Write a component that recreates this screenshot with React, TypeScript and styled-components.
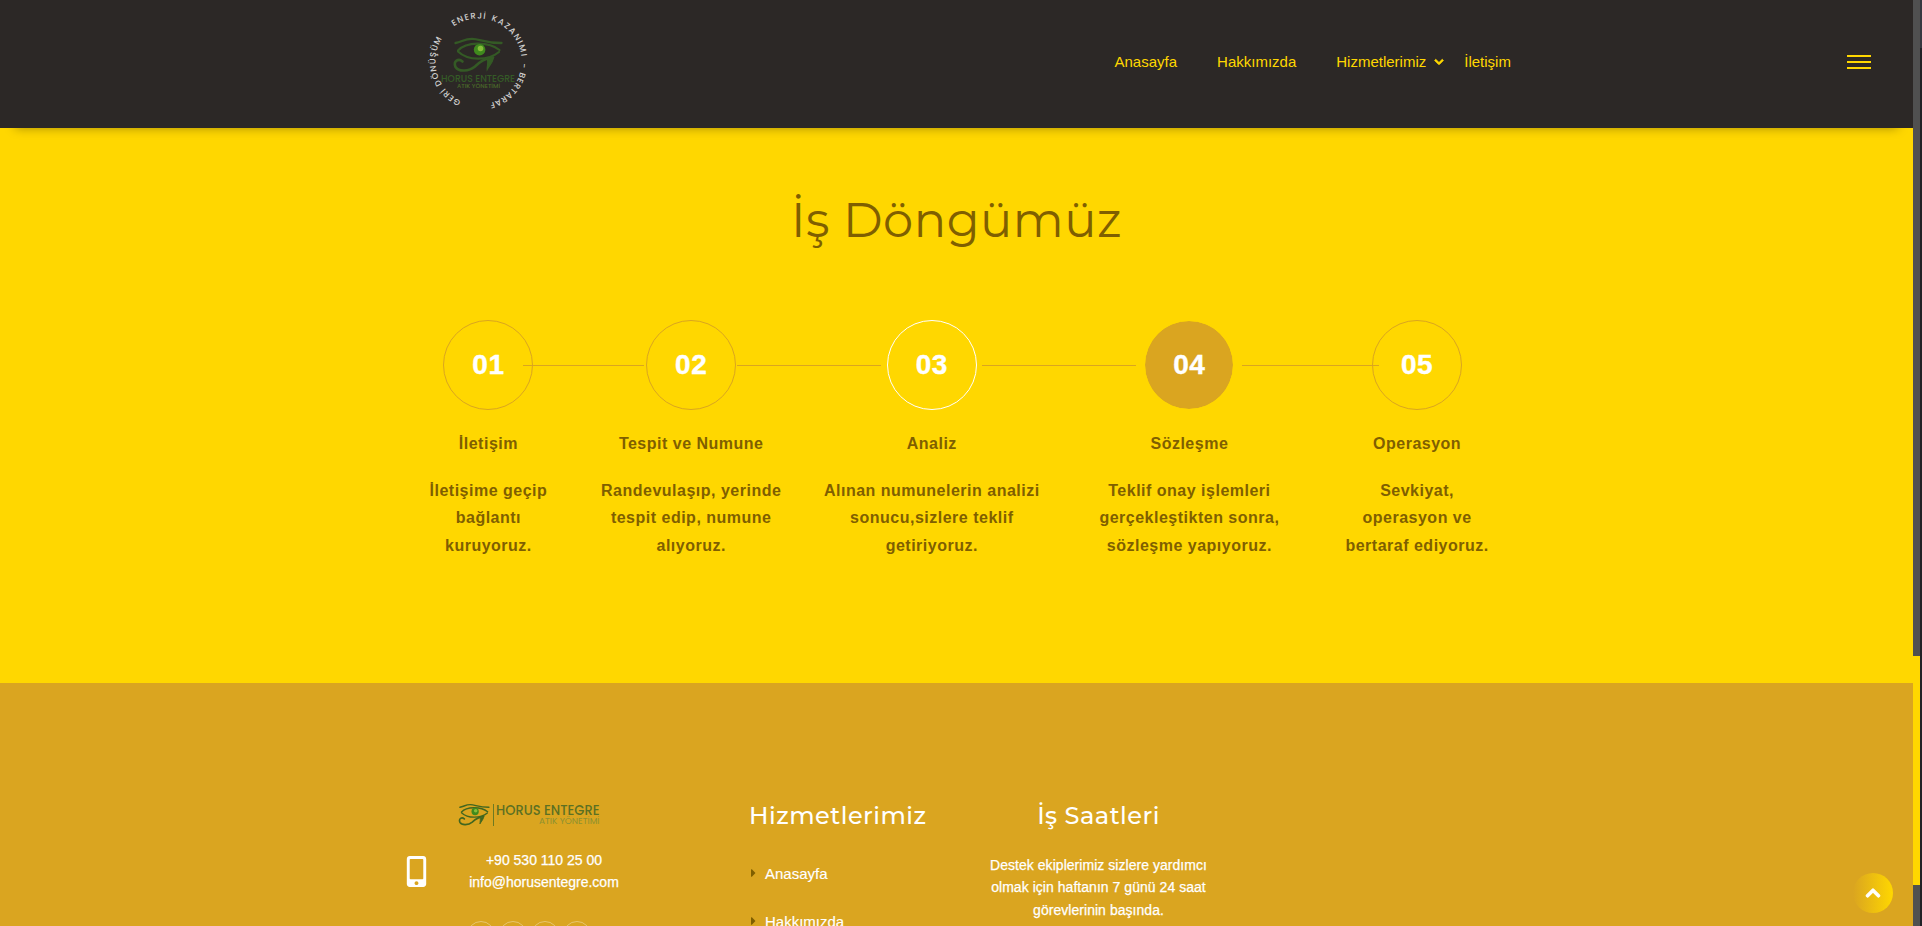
import React from 'react';
import styled, { createGlobalStyle } from 'styled-components';
import { FaCaretRight, FaChevronDown, FaChevronUp, FaMobileAlt } from 'react-icons/fa';

const gold = '#ffd700';
const amber = '#daa520';
const brown = '#7f5f00';
const display = "Montserrat, Inter, 'Open Sans', sans-serif";
const logoFont = 'Poppins, Montserrat, Inter, sans-serif';

const GlobalStyle = createGlobalStyle`
  * { box-sizing: border-box; }
  html, body { margin: 0; height: 100%; overflow: hidden; }
  body { font-family: 'Liberation Sans', Arial, sans-serif; }
  a { color: inherit; text-decoration: none; }
`;

const Shell = styled.div`
  display: grid;
  grid-template-columns: minmax(0, 1fr) 7px 2px;
  height: 926px;
  overflow: hidden;
`;

const Page = styled.div`
  position: relative;
  display: flex;
  flex-direction: column;
  height: 926px;
  overflow: hidden;
`;

const ScrollTrack = styled.div`
  background: #505050;
  padding-top: 656px;
`;

const ScrollThumb = styled.div`
  height: 229px;
  background: ${gold};
`;

const WindowEdge = styled.div`
  background: linear-gradient(#363840 48px, #212227 48px);
`;

const Header = styled.header`
  position: relative;
  z-index: 1;
  flex: none;
  height: 128px;
  display: flex;
  align-items: flex-start;
  background: #2c2826;
  color: ${gold};
  box-shadow: 0 15px 10px -15px rgba(0, 0, 0, 0.35);
`;

const SealLink = styled.a`
  display: block;
  margin-left: 418px;
  width: 120px;
  height: 120px;
`;

const Nav = styled.nav`
  display: flex;
  margin-left: 576.5px;
  padding-top: 53px;
  font-size: 15px;
  line-height: 18px;
`;

const NavItem = styled.a<{ $gap?: number }>`
  display: flex;
  align-items: center;
  margin-right: ${(p) => p.$gap ?? 40}px;
  svg {
    margin-left: 8px;
    overflow: visible;
    stroke: currentColor;
    stroke-width: 45px;
  }
`;

const Burger = styled.button`
  margin: 55px 42px 0 auto;
  padding: 0;
  width: 24px;
  border: 0;
  background: none;
  display: grid;
  gap: 4px;
`;

const BurgerLine = styled.span`
  height: 2px;
  background: ${gold};
`;

const Cycle = styled.section`
  flex: none;
  height: 555px;
  background: ${gold};
  color: ${brown};
  padding-top: 60px;
`;

const CycleTitle = styled.h2`
  margin: 0;
  text-align: center;
  font: 400 48px/64px ${display};
  letter-spacing: 0.5px;
`;

const Steps = styled.div`
  display: flex;
  margin: 68px 0 0 411px;
`;

const Step = styled.article<{ $width: number }>`
  position: relative;
  width: ${(p) => p.$width}px;
  text-align: center;
  font-weight: 700;
  font-size: 16px;
  letter-spacing: 0.5px;
`;

const Connector = styled.i<{ $from: number; $length: number }>`
  position: absolute;
  z-index: 1;
  top: 45px;
  left: ${(p) => p.$from}px;
  width: ${(p) => p.$length}px;
  height: 1px;
  background: ${amber};
`;

const StepCircle = styled.div<{ $kind: 'plain' | 'white' | 'filled' }>`
  width: 90px;
  height: 90px;
  margin: 0 auto;
  border: 1px solid ${(p) => (p.$kind === 'white' ? '#fff' : p.$kind === 'filled' ? gold : amber)};
  border-radius: 50%;
  background: ${(p) => (p.$kind === 'filled' ? amber : 'transparent')};
  background-clip: padding-box;
  color: #fff;
  font-size: 28px;
  line-height: 88px;
  -webkit-text-stroke: 0.4px #fff;
`;

const StepTitle = styled.h3`
  margin: 20px 0 0;
  font-size: 16px;
  line-height: 27px;
`;

const StepText = styled.p`
  margin: 20px 0 0;
  line-height: 27.3px;
  white-space: pre-line;
`;

const Footer = styled.footer`
  flex: none;
  height: 243px;
  overflow: hidden;
  display: flex;
  background: ${amber};
  color: #fff;
  padding: 119px 0 0 406px;
`;

const Company = styled.div`
  width: 343px;
`;

const BrandLink = styled.a`
  display: block;
  width: 144px;
  height: 26px;
  margin-left: 52px;
`;

const Contact = styled.div`
  display: flex;
  align-items: flex-start;
  margin-top: 21px;
  > svg { margin: 7px 0 0 -5px; }
`;

const ContactLines = styled.div`
  width: 150px;
  margin-left: 37px;
  display: flex;
  flex-direction: column;
  align-items: center;
  font-size: 14px;
  line-height: 22px;
  -webkit-text-stroke: 0.25px #fff;
`;

const Socials = styled.div`
  display: flex;
  gap: 4px;
  margin: 28px 0 0 61px;
`;

const SocialRing = styled.a`
  width: 28px;
  height: 28px;
  border: 1px solid rgba(255, 255, 255, 0.35);
  border-radius: 50%;
`;

const FooterTitle = styled.h4`
  margin: -3px 0 0;
  font: 500 24px/34px ${display};
  letter-spacing: 0.5px;
`;

const Services = styled.div`
  width: 240px;
`;

const ServiceLink = styled.a`
  display: flex;
  align-items: center;
  height: 48px;
  font-size: 15px;
  -webkit-text-stroke: 0.15px #fff;
  svg {
    color: ${brown};
    width: 5px;
    margin: 0 9px 0 2px;
    overflow: visible;
  }
`;

const ServiceList = styled.div`
  margin-top: 16px;
`;

const Hours = styled.div`
  width: 219px;
  text-align: center;
`;

const HoursText = styled.p`
  margin: 21px 0 0;
  font-size: 14px;
  line-height: 22.4px;
  letter-spacing: 0.04px;
  white-space: pre-line;
  -webkit-text-stroke: 0.25px #fff;
`;

const ToTop = styled.button`
  position: absolute;
  right: 20px;
  bottom: 13px;
  width: 40px;
  height: 40px;
  padding: 0;
  border: 0;
  border-radius: 50%;
  display: grid;
  place-items: center;
  color: #fff;
  background: linear-gradient(90deg, ${amber}, ${gold});
  svg {
    overflow: visible;
    stroke: currentColor;
    stroke-width: 35px;
  }
`;

const arcs = [
  { text: 'ENERJİ', from: -35, to: 9 },
  { text: 'KAZANIMI', from: 17, to: 83 },
  { text: '-', from: 92, to: 96 },
  { text: 'BERTARAF', from: 104, to: 165 },
  { text: 'GERİ', from: 204, to: 232 },
  { text: 'DÖNÜŞÜM', from: 238, to: 302 },
];

function arcPath(from: number, r: number) {
  const a = (from * Math.PI) / 180;
  const b = a + Math.PI * 0.9;
  const pt = (t: number) => `${60.5 + r * Math.sin(t)} ${61.5 - r * Math.cos(t)}`;
  return `M${pt(a)} A${r} ${r} 0 0 1 ${pt(b)}`;
}

function Eye({ lines }: { lines: string }) {
  return (
    <g fill="none" stroke={lines} strokeLinecap="round">
      <path d="M1.5 6C8 5 10 1.8 18 1.8S30 6 47.5 6" strokeWidth="2.3" />
      <path d="M4 13.5C12 5 34 4 45.5 13" strokeWidth="2.2" />
      <path d="M4 14.5C14 24 34 24 45 15" strokeWidth="2.2" />
      <path d="M39 20.5C30 21.5 26 25 21 29.5C15 34.5 4.5 35 1.5 30C-1 24 4.5 21 8.5 24.5" strokeWidth="2.6" />
      <path d="M39.5 21C38.5 26 35 29 33.2 32.5C33 29 34.5 26 33.5 22.5Z" strokeWidth="1.2" fill={lines} />
      <circle cx="25.6" cy="12.7" r="5.8" fill="#3f8a1d" stroke="none" />
      <circle cx="26.5" cy="11.5" r="2.8" fill="#86bd3a" stroke="none" />
    </g>
  );
}

function Seal() {
  const r = 43;
  return (
    <svg width="120" height="120" viewBox="0 0 120 120" fontFamily={logoFont}>
      {arcs.map((a) => (
        <React.Fragment key={a.text}>
          <path id={`arc${a.from}`} d={arcPath(a.from, r)} fill="none" />
          <text fontSize="8.4" fontWeight="500" fill="#d2d1d0">
            <textPath href={`#arc${a.from}`} textLength={((a.to - a.from) * Math.PI * r) / 180}>
              {a.text}
            </textPath>
          </text>
        </React.Fragment>
      ))}
      <g transform="translate(36 37)">
        <Eye lines="#345a25" />
      </g>
      <text x="23" y="82" fontSize="9.8" fontWeight="500" fill="#355a27" textLength="74" lengthAdjust="spacingAndGlyphs">
        HORUS ENTEGRE
      </text>
      <text x="39" y="88" fontSize="5.8" fontWeight="500" fill="#4b6b2a" textLength="43" lengthAdjust="spacingAndGlyphs">
        ATIK YÖNETİMİ
      </text>
    </svg>
  );
}

function Brand() {
  return (
    <svg width="144" height="26" viewBox="0 0 144 26" fontFamily={logoFont}>
      <g transform="translate(1 1.5) scale(.63)">
        <Eye lines="#41661f" />
      </g>
      <path d="M35.5 2v22" stroke="#6d7a22" />
      <text x="38" y="13.3" fontSize="13.4" fontWeight="500" fill="#5c7023" textLength="103.5" lengthAdjust="spacingAndGlyphs">
        HORUS ENTEGRE
      </text>
      <text x="81" y="22" fontSize="8.4" fill="#8d9130" textLength="60.5" lengthAdjust="spacingAndGlyphs">
        ATIK YÖNETİMİ
      </text>
    </svg>
  );
}

type StepData = {
  no: string;
  title: string;
  text: string;
  width: number;
  kind: 'plain' | 'white' | 'filled';
  line?: [number, number];
};

const steps: StepData[] = [
  { no: '01', title: 'İletişim', text: 'İletişime geçip\nbağlantı\nkuruyoruz.', width: 154.8, kind: 'plain', line: [112, 121] },
  { no: '02', title: 'Tespit ve Numune', text: 'Randevulaşıp, yerinde\ntespit edip, numune\nalıyoruz.', width: 250.8, kind: 'plain', line: [171.2, 144] },
  { no: '03', title: 'Analiz', text: 'Alınan numunelerin analizi\nsonucu,sizlere teklif\ngetiriyoruz.', width: 230.4, kind: 'white', line: [165.4, 154] },
  { no: '04', title: 'Sözleşme', text: 'Teklif onay işlemleri\ngerçekleştikten sonra,\nsözleşme yapıyoruz.', width: 284.8, kind: 'filled', line: [195, 137] },
  { no: '05', title: 'Operasyon', text: 'Sevkiyat,\noperasyon ve\nbertaraf ediyoruz.', width: 170.6, kind: 'plain' },
];

export default function App() {
  return (
    <Shell>
      <GlobalStyle />
      <Page>
        <Header>
          <SealLink href="#"><Seal /></SealLink>
          <Nav>
            <NavItem href="#">Anasayfa</NavItem>
            <NavItem href="#">Hakkımızda</NavItem>
            <NavItem href="#" $gap={20}>Hizmetlerimiz <FaChevronDown size={10} /></NavItem>
            <NavItem href="#" $gap={0}>İletişim</NavItem>
          </Nav>
          <Burger aria-label="Menü"><BurgerLine /><BurgerLine /><BurgerLine /></Burger>
        </Header>
        <Cycle>
          <CycleTitle>İş Döngümüz</CycleTitle>
          <Steps>
            {steps.map((s) => (
              <Step key={s.no} $width={s.width}>
                {s.line && <Connector $from={s.line[0]} $length={s.line[1]} />}
                <StepCircle $kind={s.kind}>{s.no}</StepCircle>
                <StepTitle>{s.title}</StepTitle>
                <StepText>{s.text}</StepText>
              </Step>
            ))}
          </Steps>
        </Cycle>
        <Footer>
          <Company>
            <BrandLink href="#"><Brand /></BrandLink>
            <Contact>
              <FaMobileAlt size={31} />
              <ContactLines>
                <a href="#">+90 530 110 25 00</a>
                <a href="#">info@horusentegre.com</a>
              </ContactLines>
            </Contact>
            <Socials><SocialRing /><SocialRing /><SocialRing /><SocialRing /></Socials>
          </Company>
          <Services>
            <FooterTitle>Hizmetlerimiz</FooterTitle>
            <ServiceList>
              <ServiceLink href="#"><FaCaretRight size={16} />Anasayfa</ServiceLink>
              <ServiceLink href="#"><FaCaretRight size={16} />Hakkımızda</ServiceLink>
            </ServiceList>
          </Services>
          <Hours>
            <FooterTitle>İş Saatleri</FooterTitle>
            <HoursText>{'Destek ekiplerimiz sizlere yardımcı\nolmak için haftanın 7 günü 24 saat\ngörevlerinin başında.'}</HoursText>
          </Hours>
        </Footer>
        <ToTop aria-label="Yukarı"><FaChevronUp size={16} /></ToTop>
      </Page>
      <ScrollTrack><ScrollThumb /></ScrollTrack>
      <WindowEdge />
    </Shell>
  );
}
